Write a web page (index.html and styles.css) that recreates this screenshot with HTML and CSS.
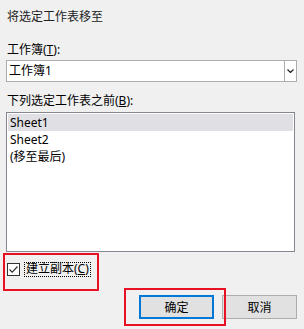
FILE: index.html
```html
<!DOCTYPE html>
<html lang="zh-CN">
<head>
  <meta charset="UTF-8" />
  <title>移动或复制工作表</title>
  <link rel="stylesheet" href="styles.css">
</head>
<body>
  <div class="dialog">
    <div class="title">将选定工作表移至</div>

    <div class="label first">工作簿(<u>T</u>):</div>
    <div class="combo">
      <span class="combo-value">工作簿1</span>
      <span class="combo-arrow">
        <svg width="7" height="4" viewBox="0 0 7 4"><path d="M0.5 0.5 L3.5 3.5 L6.5 0.5" fill="none" stroke="#222" stroke-width="1.2"/></svg>
      </span>
    </div>

    <div class="label second">下列选定工作表之前(<u>B</u>):</div>
    <div class="listbox">
      <div class="item selected">Sheet1</div>
      <div class="item">Sheet2</div>
      <div class="item">(移至最后)</div>
    </div>

    <div class="check-row">
      <span class="checkbox">
        <svg width="11" height="11" viewBox="0 0 11 11"><path d="M1.5 5.5 L4.2 8.2 L9.5 2.5" fill="none" stroke="#333" stroke-width="1.2"/></svg>
      </span>
      <span class="check-label">建立副本(<u>C</u>)</span>
    </div>

    <div class="buttons">
      <button class="btn default">确定</button>
      <button class="btn">取消</button>
    </div>
  </div>

  <!-- annotation highlights -->
  <div class="mark mark-check"></div>
  <div class="mark mark-ok"></div>
</body>
</html>
```

FILE: styles.css
```css
body {
  margin: 0;
  background: #f0f0f0;
  font-family: "Noto Sans", "Noto Sans CJK SC", sans-serif;
  font-size: 12px;
  color: #000;
  width: 304px;
  height: 329px;
  position: relative;
  overflow: hidden;
}

.dialog {
  padding: 0 7px 0 6px;
}

.title,
.label {
  line-height: 16px;
  padding-left: 1px;
}

.title {
  margin-top: 9px;
  color: #222;
}

.label.first {
  margin-top: 17px;
}

.label.second {
  margin-top: 11px;
}

u {
  text-decoration: underline;
  text-underline-offset: 1px;
}

.combo {
  margin-top: 2px;
  height: 22px;
  box-sizing: border-box;
  border: 1px solid #adadad;
  background: #fff;
  display: flex;
  align-items: center;
}

.combo-value {
  flex: 1;
  padding-left: 2px;
  line-height: 20px;
}

.combo-arrow {
  width: 11px;
  height: 20px;
  border-left: 1px solid #adadad;
  display: flex;
  align-items: center;
  justify-content: center;
}

.listbox {
  margin-top: 3px;
  margin-right: 2px;
  height: 140px;
  box-sizing: border-box;
  border: 1px solid #828790;
  background: #fff;
  padding: 1px;
}

.item {
  height: 17px;
  line-height: 17px;
  padding-left: 2px;
}

.item.selected {
  background: #e0e0e4;
}

.check-row {
  margin-top: 10px;
  height: 14px;
  display: flex;
  align-items: center;
  padding-left: 1px;
}

.checkbox {
  width: 13px;
  height: 13px;
  box-sizing: border-box;
  border: 1px solid #333;
  background: #fff;
  display: flex;
  align-items: center;
  justify-content: center;
}

.check-label {
  margin-left: 5px;
  line-height: 12px;
  padding: 0 1px 1px;
  outline: 1px dotted #000;
}

.buttons {
  margin-top: 19px;
  display: flex;
  justify-content: flex-end;
  gap: 8px;
  padding-right: 0;
}

.btn {
  width: 75px;
  height: 24px;
  box-sizing: border-box;
  border: 1px solid #adadad;
  background: #e1e1e1;
  font-family: inherit;
  font-size: 12px;
  color: #000;
  padding: 0;
}

.btn.default {
  border: 2px solid #0078d7;
}

.mark {
  position: absolute;
  box-sizing: border-box;
  border: 2px solid #e81123;
}

.mark-check {
  left: 3px;
  top: 253px;
  width: 96px;
  height: 38px;
}

.mark-ok {
  left: 124px;
  top: 288px;
  width: 102px;
  height: 38px;
}
```
